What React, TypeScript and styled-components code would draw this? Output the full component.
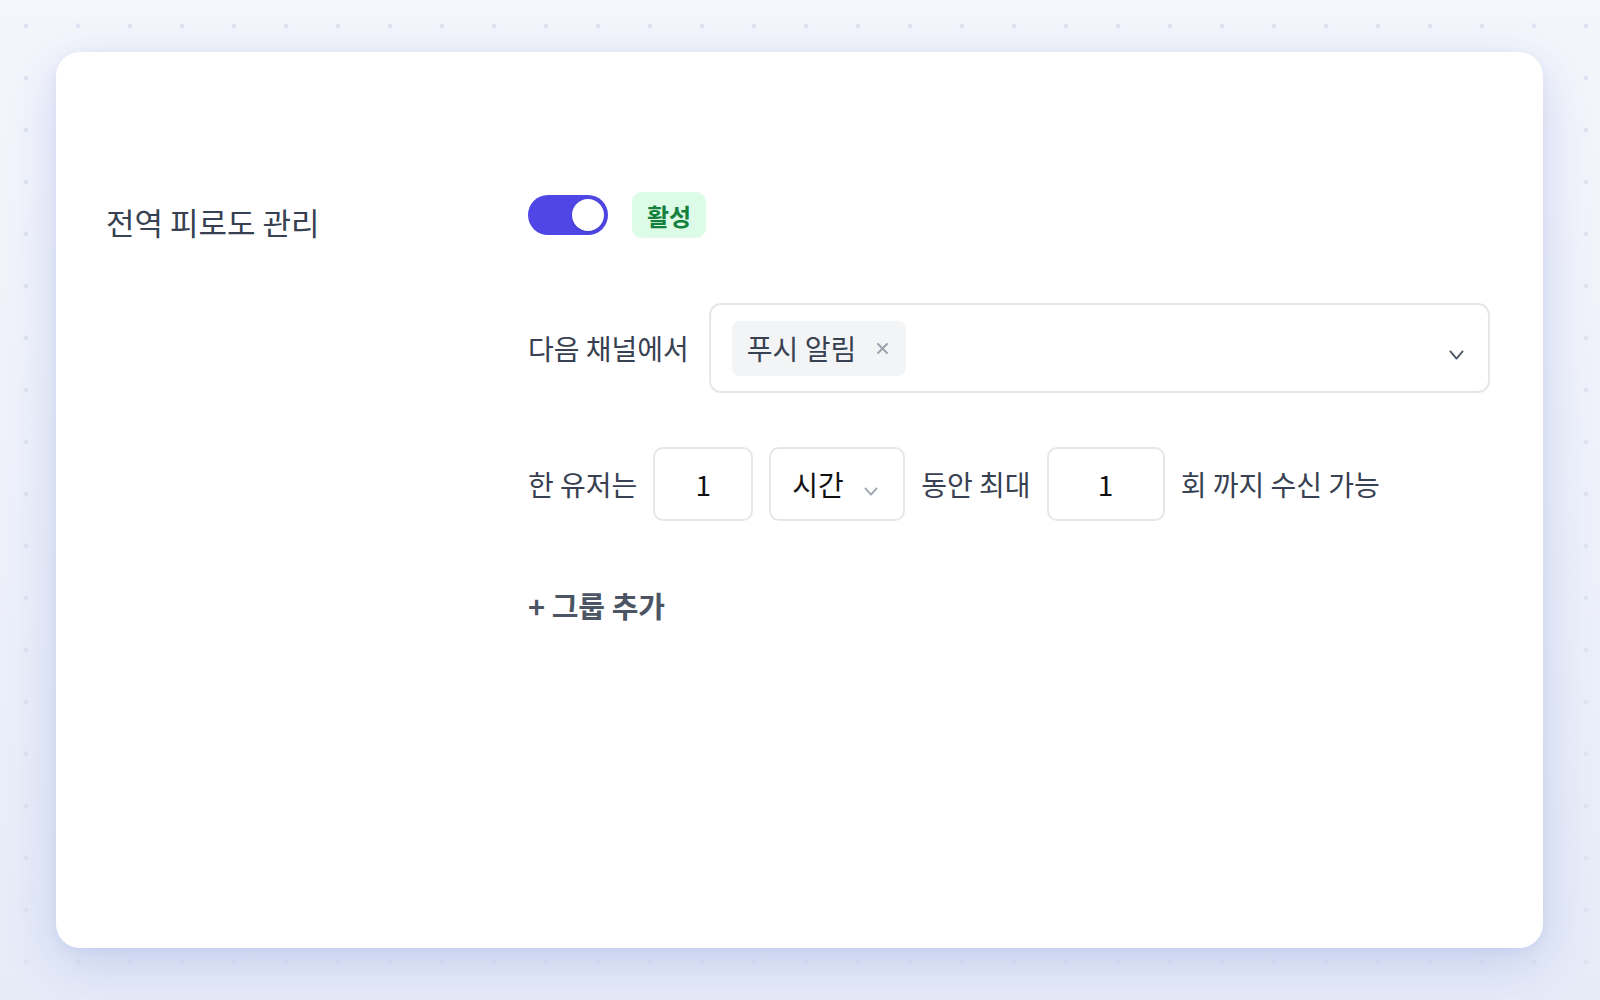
import React from "react";
import styled, { createGlobalStyle } from "styled-components";

const Global = createGlobalStyle`
  html, body { margin: 0; padding: 0; }
  body {
    font-family: "Noto Sans CJK KR", "Noto Sans", sans-serif;
    background-color: #eef1fa;
    background-image:
      radial-gradient(circle, #dfe3f1 1.6px, rgba(223, 227, 241, 0) 3px),
      linear-gradient(180deg, #f5f6fc 0%, #eef1fa 50%, #e6ebf8 100%);
    background-size: 52px 52px, 100% 100%;
    background-position: 0 0, 0 0;
  }
  * { box-sizing: border-box; }
`;

const Page = styled.div`
  height: 1000px;
  padding: 52px 57px 52px 56px;
  display: flex;
`;

const Card = styled.div`
  flex: 1;
  background: #ffffff;
  border-radius: 24px;
  box-shadow: 0 14px 50px rgba(70, 100, 200, 0.22), 0 2px 8px rgba(70, 100, 200, 0.06);
  padding: 140px 53px 0 50px;
  display: grid;
  grid-template-columns: 422px 1fr;
  align-items: start;
`;

const Title = styled.h2`
  margin: 0;
  padding-top: 7px;
  font-size: 31px;
  line-height: 46px;
  font-weight: 400;
  color: #374151;
`;

const Column = styled.div`
  display: flex;
  flex-direction: column;
`;

const Row = styled.div<{ $top?: number; $gap?: number; $h?: number }>`
  display: flex;
  align-items: center;
  gap: ${(p) => p.$gap ?? 18}px;
  margin-top: ${(p) => p.$top ?? 0}px;
  min-height: ${(p) => p.$h ?? 0}px;
`;

const Toggle = styled.div`
  position: relative;
  width: 80px;
  height: 40px;
  border-radius: 20px;
  background: #4f46e5;
  flex: none;
`;

const Knob = styled.span`
  position: absolute;
  top: 4px;
  right: 4px;
  width: 32px;
  height: 32px;
  border-radius: 50%;
  background: #ffffff;
  box-shadow: 0 1px 3px rgba(0, 0, 0, 0.15);
`;

const Badge = styled.span`
  display: inline-flex;
  align-items: center;
  height: 46px;
  padding: 0 15px;
  border-radius: 10px;
  background: #dcfce7;
  color: #15803d;
  font-size: 24px;
  font-weight: 700;
`;

const Label = styled.span`
  font-size: 28px;
  line-height: 39px;
  color: #374151;
  white-space: nowrap;
  flex: none;
`;

const MultiSelect = styled.div`
  flex: 1;
  height: 90px;
  border: 2px solid #e5e7eb;
  border-radius: 12px;
  display: flex;
  align-items: center;
  padding: 0 24px 0 21px;
`;

const Chip = styled.span`
  display: inline-flex;
  align-items: center;
  height: 55px;
  padding: 0 17px 0 15px;
  border-radius: 8px;
  background: #f3f4f6;
  font-size: 28px;
  color: #374151;
`;

const ChipX = styled.span`
  display: inline-flex;
  margin-left: 20px;
  color: #9ca3af;
`;

const Spacer = styled.span`
  flex: 1;
`;

const Chevron = styled.span<{ $drop?: number }>`
  display: inline-flex;
  margin-top: ${(p) => p.$drop ?? 0}px;
  flex: none;
`;

const Box = styled.div<{ $w: number }>`
  width: ${(p) => p.$w}px;
  height: 74px;
  border: 2px solid #e5e7eb;
  border-radius: 10px;
  display: flex;
  align-items: center;
  justify-content: center;
  font-size: 28px;
  color: #111111;
  flex: none;
`;

const SelectBox = styled(Box)`
  justify-content: flex-start;
  padding: 0 23px 0 21px;
  gap: 20px;
`;

const AddButton = styled.button`
  align-self: flex-start;
  margin-top: 65px;
  padding: 0;
  border: none;
  background: none;
  font-family: inherit;
  font-size: 29px;
  line-height: 39px;
  font-weight: 700;
  color: #4b5563;
  cursor: pointer;
`;

const XIcon = () => (
  <svg width="13" height="13" viewBox="0 0 13 13" fill="none">
    <path d="M2 2L11 11M11 2L2 11" stroke="currentColor" strokeWidth="2" strokeLinecap="round" />
  </svg>
);

const ChevronIcon = ({ w, h, color, sw }: { w: number; h: number; color: string; sw: number }) => (
  <svg width={w} height={h} viewBox={`0 0 ${w} ${h}`} fill="none">
    <path
      d={`M${sw / 2 + 0.5} ${sw / 2 + 0.5}L${w / 2} ${h - sw / 2 - 0.5}L${w - sw / 2 - 0.5} ${sw / 2 + 0.5}`}
      stroke={color}
      strokeWidth={sw}
      strokeLinecap="round"
      strokeLinejoin="round"
    />
  </svg>
);

export default function App() {
  return (
    <>
      <Global />
      <Page>
        <Card>
          <Title>전역 피로도 관리</Title>
          <Column>
            <Row $gap={24} $h={46}>
              <Toggle>
                <Knob />
              </Toggle>
              <Badge>활성</Badge>
            </Row>
            <Row $top={65} $gap={20}>
              <Label>다음 채널에서</Label>
              <MultiSelect>
                <Chip>
                  푸시 알림
                  <ChipX>
                    <XIcon />
                  </ChipX>
                </Chip>
                <Spacer />
                <Chevron $drop={14}>
                  <ChevronIcon w={15} h={10} color="#4b5563" sw={1.8} />
                </Chevron>
              </MultiSelect>
            </Row>
            <Row $top={54} $gap={16}>
              <Label>한 유저는</Label>
              <Box $w={100}>1</Box>
              <SelectBox $w={136}>
                시간
                <Chevron $drop={14}>
                  <ChevronIcon w={14} h={9} color="#9ca3af" sw={1.8} />
                </Chevron>
              </SelectBox>
              <Label>동안 최대</Label>
              <Box $w={118}>1</Box>
              <Label>회 까지 수신 가능</Label>
            </Row>
            <AddButton>+ 그룹 추가</AddButton>
          </Column>
        </Card>
      </Page>
    </>
  );
}
